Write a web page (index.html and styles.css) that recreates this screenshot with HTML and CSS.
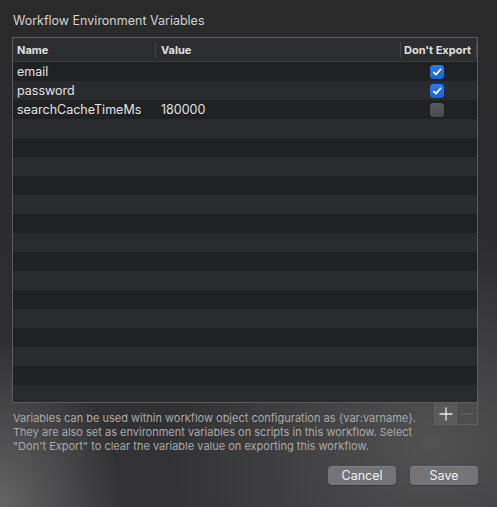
FILE: index.html
```html
<!DOCTYPE html>
<html>
<head>
<meta charset="utf-8">
<link rel="stylesheet" href="styles.css">
</head>
<body>
<div class="sheet">
  <div class="title">Workflow Environment Variables</div>
  <div class="table">
    <div class="thead">
      <div class="th c-name">Name</div>
      <div class="th c-value">Value</div>
      <div class="th c-exp">Don't Export</div>
    </div>
    <div class="tbody">
      <div class="tr">
        <div class="td c-name">email</div>
        <div class="td c-value"></div>
        <div class="td c-exp"><span class="cb on"><svg viewBox="0 0 14 14" width="14" height="14"><path d="M3.6 7.3 L6 9.6 L10.6 4.3" fill="none" stroke="#fff" stroke-width="1.7" stroke-linecap="round" stroke-linejoin="round"/></svg></span></div>
      </div>
      <div class="tr">
        <div class="td c-name">password</div>
        <div class="td c-value"></div>
        <div class="td c-exp"><span class="cb on"><svg viewBox="0 0 14 14" width="14" height="14"><path d="M3.6 7.3 L6 9.6 L10.6 4.3" fill="none" stroke="#fff" stroke-width="1.7" stroke-linecap="round" stroke-linejoin="round"/></svg></span></div>
      </div>
      <div class="tr">
        <div class="td c-name">searchCacheTimeMs</div>
        <div class="td c-value">180000</div>
        <div class="td c-exp"><span class="cb"></span></div>
      </div>
    </div>
  </div>
  <div class="below">
    <p class="help">Variables can be used within workflow object configuration as {var:varname}. They are also set as environment variables on scripts in this workflow. Select "Don't Export" to clear the variable value on exporting this workflow.</p>
    <div class="pm">
      <div class="pmbtn plus"><svg viewBox="0 0 22 22" width="22" height="22"><path d="M11 4.5 V17.5 M4.5 11 H17.5" stroke="#e8e8e8" stroke-width="1.3"/></svg></div>
      <div class="pmbtn minus"><svg viewBox="0 0 22 22" width="22" height="22"><path d="M5 11 H17" stroke="#6a6a6a" stroke-width="1.2"/></svg></div>
    </div>
  </div>
  <div class="actions">
    <button class="btn">Cancel</button>
    <button class="btn">Save</button>
  </div>
</div>
</body>
</html>
```
FILE: styles.css
```css
html, body {
  margin: 0;
  padding: 0;
  width: 497px;
  height: 507px;
  overflow: hidden;
}
body {
  font-family: Inter, "Liberation Sans", sans-serif;
  color: #dcdcdc;
  background:
    radial-gradient(ellipse 120px 170px at 0px 507px, rgba(140,140,140,0.55), rgba(140,140,140,0) 100%),
    radial-gradient(ellipse 260px 200px at 430px 440px, rgba(120,120,120,0.45), rgba(120,120,120,0) 100%),
    linear-gradient(#2a2a2b, #2d2d2f 60%, #343436);
}
.sheet {
  padding: 13px 20px 0 12px;
  display: flex;
  flex-direction: column;
}
.title {
  font-size: 12.5px;
  line-height: 16px;
  color: #d2d2d2;
  padding-left: 1px;
  height: 24px;
}
.table {
  width: 464px;
  height: 364px;
  border: 1px solid #5c5c5e;
  background: #202123;
  display: flex;
  flex-direction: column;
  overflow: hidden;
}
.thead {
  height: 23px;
  display: flex;
  align-items: center;
  background: #2b2d2f;
  border-bottom: 1px solid #38393b;
  flex: none;
}
.th {
  font-size: 11px;
  font-weight: 700;
  color: #e0e0e0;
  height: 16px;
  line-height: 16px;
  box-sizing: border-box;
}
.c-name { width: 142px; padding-left: 4px; }
.c-value { width: 245px; padding-left: 5px; }
.c-exp { flex: 1; padding-left: 4px; }
.th.c-value, .th.c-exp { border-left: 1px solid #464749; }
.th.c-exp { border-right: 1px solid #464749; padding-left: 3px; }
.tbody {
  flex: 1;
  background: repeating-linear-gradient(#202123 0, #202123 19px, #2a2b2e 19px, #2a2b2e 38px);
}
.tr {
  display: flex;
  height: 19px;
  align-items: center;
}
.td {
  font-size: 12.5px;
  color: #e2e2e2;
  box-sizing: border-box;
}
.td.c-value { padding-left: 6px; }
.td.c-exp { display: flex; padding-left: 30px; }
.cb {
  width: 14px;
  height: 14px;
  border-radius: 3.5px;
  background: linear-gradient(#5a5a5c, #4a4a4c);
  box-sizing: border-box;
  display: block;
}
.cb.on {
  background: linear-gradient(#2a7af0, #1a62dc);
}
.cb svg { display: block; }
.below {
  display: flex;
  justify-content: space-between;
}
.help {
  margin: 8px 0 0 1px;
  width: 418px;
  font-size: 11px;
  line-height: 14px;
  color: #a9a9a9;
}
.pm {
  display: flex;
  height: 22px;
  margin-right: -1px;
}
.pmbtn {
  width: 22px;
  height: 22px;
  border: 1px solid #5f5f60;
  border-top: none;
  box-sizing: border-box;
  display: flex;
  align-items: center;
  justify-content: center;
}
.pmbtn svg { display: block; flex: none; }
.plus { background: rgba(255,255,255,0.08); border-right: none; }
.minus { background: rgba(255,255,255,0.02); }
.actions {
  display: flex;
  justify-content: flex-end;
  gap: 14px;
  margin-top: 13px;
  margin-right: -1px;
}
.btn {
  width: 68px;
  height: 19px;
  border: none;
  border-radius: 4px;
  background: #747476;
  color: #f0f0f0;
  font-family: Inter, "Liberation Sans", sans-serif;
  font-size: 12.5px;
  line-height: 19px;
  padding: 0;
  box-shadow: 0 0.5px 0 rgba(0,0,0,0.4), inset 0 0.5px 0 rgba(255,255,255,0.15);
}
```
